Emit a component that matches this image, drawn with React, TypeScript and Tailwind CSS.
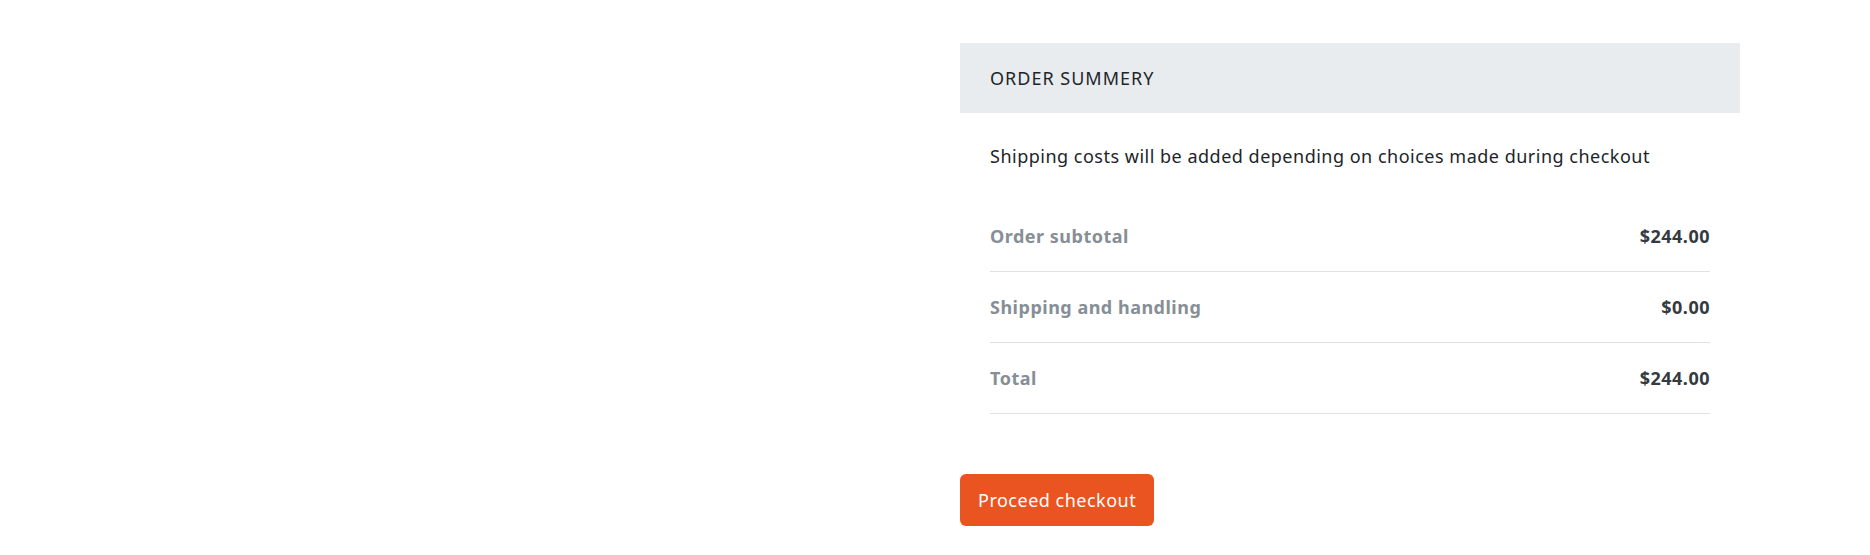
import React from "react";

const rows = [
  { label: "Order subtotal", value: "$244.00" },
  { label: "Shipping and handling", value: "$0.00" },
  { label: "Total", value: "$244.00" },
];

export default function App() {
  return (
    <div
      className="w-[1870px] h-[555px] bg-white flex tracking-[0.5px]"
      style={{ fontFamily: '"Noto Sans", "Open Sans", sans-serif' }}
    >
      <div className="w-[960px] shrink-0" />
      <div className="w-[780px] shrink-0 pt-[43px]">
        <div className="h-[70px] bg-[#e9ecef] flex items-center px-[30px] text-[18px] tracking-[1px] text-[#212529]">
          ORDER SUMMERY
        </div>
        <div className="px-[30px] pt-[30px]">
          <p className="text-[18px] leading-[27px] text-[#212529]">
            Shipping costs will be added depending on choices made during checkout
          </p>
          <div className="mt-[31px]">
            {rows.map((r) => (
              <div
                key={r.label}
                className="h-[71px] flex items-center justify-between border-b border-[#dee2e6] text-[18px] font-bold"
              >
                <span className="text-[#868e96]">{r.label}</span>
                <span className="text-[#343a40]">{r.value}</span>
              </div>
            ))}
          </div>
        </div>
        <button className="mt-[60px] h-[52px] px-[18px] rounded-[6px] bg-[#e95420] text-white text-[18px]">
          Proceed checkout
        </button>
      </div>
    </div>
  );
}
